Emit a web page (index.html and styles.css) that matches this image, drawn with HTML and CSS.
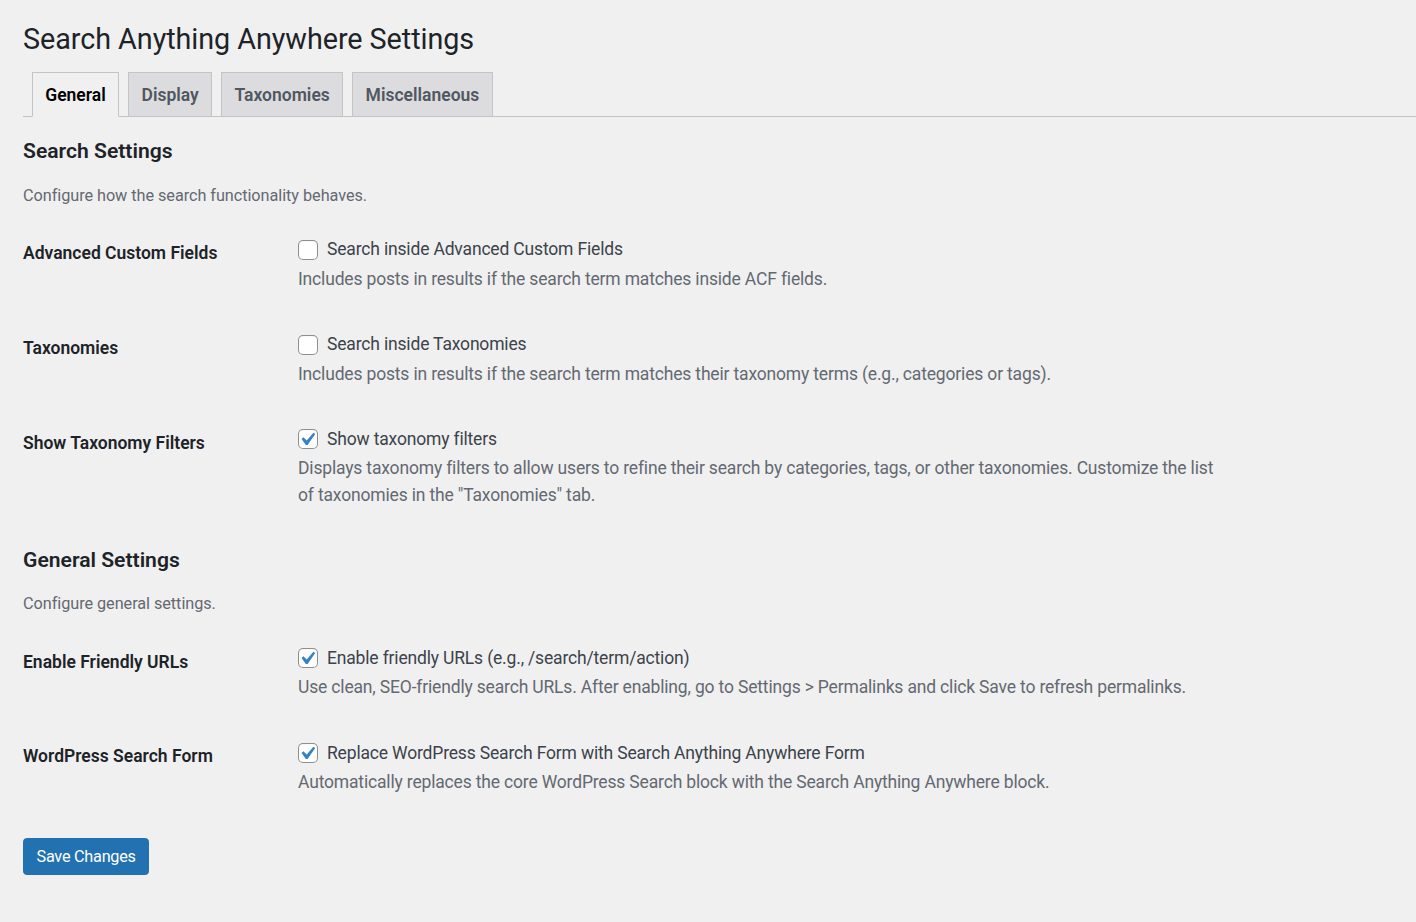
FILE: index.html
```html
<!DOCTYPE html>
<html lang="en">
<head>
<meta charset="utf-8">
<title>Search Anything Anywhere Settings</title>
<link rel="stylesheet" href="styles.css">
</head>
<body>
<div class="wrap">
  <h1 class="page-title">Search Anything Anywhere Settings</h1>
  <nav class="tabs">
    <a class="tab tab-active">General</a>
    <a class="tab">Display</a>
    <a class="tab">Taxonomies</a>
    <a class="tab">Miscellaneous</a>
  </nav>

  <h2 class="section-title">Search Settings</h2>
  <p class="section-desc">Configure how the search functionality behaves.</p>
  <table class="form-table">
    <tr>
      <th>Advanced Custom Fields</th>
      <td>
        <label class="check"><span class="cb"></span>Search inside Advanced Custom Fields</label>
        <p class="description">Includes posts in results if the search term matches inside ACF fields.</p>
      </td>
    </tr>
    <tr>
      <th>Taxonomies</th>
      <td>
        <label class="check"><span class="cb"></span>Search inside Taxonomies</label>
        <p class="description">Includes posts in results if the search term matches their taxonomy terms (e.g., categories or tags).</p>
      </td>
    </tr>
    <tr>
      <th>Show Taxonomy Filters</th>
      <td>
        <label class="check"><span class="cb"><svg viewBox="3.05 2.1 15.24 15.24"><path d="M14.83 4.89l1.34.94-5.81 8.38H9.02L5.78 9.67l1.34-1.25 2.57 2.4z"/></svg></span>Show taxonomy filters</label>
        <p class="description">Displays taxonomy filters to allow users to refine their search by categories, tags, or other taxonomies. Customize the list<br>of taxonomies in the "Taxonomies" tab.</p>
      </td>
    </tr>
  </table>

  <h2 class="section-title">General Settings</h2>
  <p class="section-desc">Configure general settings.</p>
  <table class="form-table">
    <tr>
      <th>Enable Friendly URLs</th>
      <td>
        <label class="check"><span class="cb"><svg viewBox="3.05 2.1 15.24 15.24"><path d="M14.83 4.89l1.34.94-5.81 8.38H9.02L5.78 9.67l1.34-1.25 2.57 2.4z"/></svg></span>Enable friendly URLs (e.g., /search/term/action)</label>
        <p class="description">Use clean, SEO-friendly search URLs. After enabling, go to Settings &gt; Permalinks and click Save to refresh permalinks.</p>
      </td>
    </tr>
    <tr>
      <th>WordPress Search Form</th>
      <td>
        <label class="check"><span class="cb"><svg viewBox="3.05 2.1 15.24 15.24"><path d="M14.83 4.89l1.34.94-5.81 8.38H9.02L5.78 9.67l1.34-1.25 2.57 2.4z"/></svg></span>Replace WordPress Search Form with Search Anything Anywhere Form</label>
        <p class="description">Automatically replaces the core WordPress Search block with the Search Anything Anywhere block.</p>
      </td>
    </tr>
  </table>

  <p class="submit"><button class="button-primary" type="button">Save Changes</button></p>
</div>
</body>
</html>
```

FILE: styles.css
```css
html, body {
  margin: 0;
  padding: 0;
  background: #f0f0f1;
}
body {
  font-family: Roboto, "Liberation Sans", sans-serif;
  color: #3c434a;
  font-size: 16.25px;
}
.wrap {
  padding: 0 0 0 23px;
}
.page-title {
  margin: 0;
  padding: 21px 0 3px;
  font-size: 28.75px;
  font-weight: 400;
  line-height: 37.4px;
  color: #1d2327;
  letter-spacing: -0.05px;
}
.tabs {
  display: flex;
  align-items: flex-end;
  padding-top: 11px;
  margin-bottom: 23px;
  border-bottom: 1px solid #c3c4c7;
}
.tab {
  margin-left: 8.75px;
  padding: 6.25px 12.5px;
  border: 1px solid #c3c4c7;
  border-bottom: none;
  background: #dcdcde;
  color: #50575e;
  font-size: 17.5px;
  font-weight: 600;
  line-height: 30px;
  text-decoration: none;
}
.tab-active {
  margin-bottom: -1px;
  border-bottom: 1px solid #f0f0f1;
  background: #f0f0f1;
  color: #000;
}
.section-title {
  margin: 21px 0;
  font-size: 21.125px;
  font-weight: 600;
  line-height: 22.75px;
  color: #1d2327;
}
.section-desc {
  margin: 0 0 9px;
  font-size: 16.25px;
  line-height: 24.4px;
  color: #646970;
  letter-spacing: -0.05px;
}
.form-table {
  width: 100%;
  border-collapse: collapse;
}
.form-table th {
  width: 250px;
  padding: 25px 12.5px 25px 0;
  text-align: left;
  vertical-align: top;
  font-size: 17.5px;
  font-weight: 600;
  line-height: 22.75px;
  color: #1d2327;
}
.form-table td {
  padding: 17.75px 12.5px 19.75px;
  vertical-align: middle;
  font-size: 17.5px;
  line-height: 22.75px;
  letter-spacing: -0.17px;
}
.check {
  display: flex;
  align-items: center;
  gap: 9px;
  box-sizing: border-box;
  height: 27px;
  padding-top: 3px;
  color: #3c434a;
}
.cb {
  flex: none;
  width: 20px;
  height: 20px;
  border-radius: 5px;
  background: #fff;
  box-shadow: inset 0 0 0 1px #8c8f94, inset 0 1px 2px rgba(0,0,0,.1);
}
.cb svg {
  display: block;
  width: 20px;
  height: 20px;
  fill: #3582c4;
}
.description {
  margin: 4px 0 0;
  font-size: 17.5px;
  line-height: 26.25px;
  color: #646970;
}
.submit {
  margin: 23px 0 0;
  padding: 0;
}
.button-primary {
  height: 37px;
  padding: 0 12.5px;
  border: 1px solid #2271b1;
  border-radius: 3.75px;
  background: #2271b1;
  color: #fff;
  font-family: inherit;
  font-size: 16.25px;
  line-height: 35px;
  letter-spacing: -0.25px;
  cursor: pointer;
}
```
